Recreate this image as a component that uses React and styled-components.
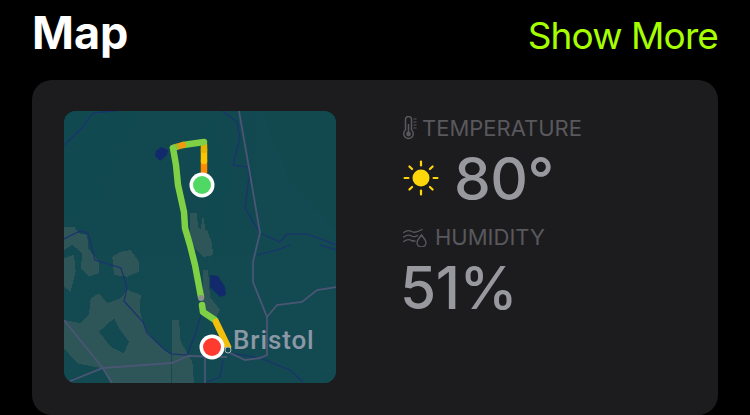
import styled, {createGlobalStyle} from "styled-components";

const GlobalStyle = createGlobalStyle`
  html, body {
    margin: 0;
    background: #000;
    overflow: hidden;
  }
`;

const Page = styled.div`
  width: 750px;
  height: 415px;
  box-sizing: border-box;
  padding: 0 32px;
  font-family: Inter, "Liberation Sans", sans-serif;
`;

const Header = styled.header`
  display: flex;
  justify-content: space-between;
  align-items: baseline;
  height: 80px;
  box-sizing: border-box;
  padding-top: 5px;
`;

const Title = styled.h1`
  margin: 0;
  font-size: 45px;
  line-height: 56px;
  font-weight: 700;
  color: #fff;
`;

const ShowMore = styled.a`
  font-size: 37px;
  line-height: 56px;
  font-weight: 400;
  letter-spacing: -0.9px;
  color: #a6ff00;
`;

const Card = styled.section`
  display: flex;
  gap: 64px;
  height: 335px;
  box-sizing: border-box;
  padding: 31px 32px;
  background: #1c1c1e;
  border-radius: 20px;
`;

const MapBox = styled.div`
  position: relative;
  flex: none;
  width: 272px;
  height: 272px;
  border-radius: 12px;
  overflow: hidden;
  background: #134951;

  svg {
    display: block;
  }
`;

const MapLabel = styled.span`
  position: absolute;
  left: 169px;
  top: 214px;
  font-family: Roboto, "Liberation Sans", sans-serif;
  font-size: 26px;
  line-height: 30px;
  font-weight: 500;
  letter-spacing: 0.9px;
  color: #8c98a6;
`;

const Stats = styled.div`
  display: flex;
  flex-direction: column;
  padding-top: 3px;
`;

const StatLabel = styled.div`
  display: flex;
  align-items: center;
  height: 28px;
  font-size: 22px;
  color: #58585d;

  svg {
    flex: none;
    margin-left: 3px;
    margin-right: ${props => props.$iconGap}px;
  }
`;

const StatValue = styled.div`
  display: flex;
  align-items: center;
  height: 72px;
  margin-bottom: 9px;
  font-size: 58.5px;
  font-weight: 500;
  letter-spacing: -0.5px;
  color: #98989f;

  svg {
    flex: none;
    margin-left: 3px;
    margin-right: 15px;
  }
`;

const routeSegments = [
  {color: "#ff8c00", d: "M204 172V161"},
  {color: "#ffc400", d: "M204 161V150"},
  {color: "#e8b400", d: "M204 150V145"},
  {color: "#7fd044", d: "M204 142L183 145"},
  {color: "#f09a10", d: "M183 145L176 147"},
  {color: "#a4b82a", d: "M176 147L173 148"},
  {color: "#7fd044", d: "M173 148L176 165L178 185L184 212L185 228L190 245L195 265L201 297"},
  {color: "#7fd044", d: "M202 305L203 312L215 320"},
  {color: "#f2bf0c", d: "M216 322L228 347"},
];

const roads = [
  "M239 111L249 168L260 233L257 245L253 262L253 282L267 317L267 355L260 358L245 360L230 353",
  "M267 317L277 305L302 302L317 290L337 287",
  "M64 320L102 367L112 383",
  "M68 382L103 368L172 363L188 356L227 357",
  "M205 357V383",
];

const borders = [
  "M64 145L80 130L93 113L115 111",
  "M223 111L237 122L240 138L233 165L248 167L249 177L245 208L260 233",
  "M260 233L280 242L287 234L307 234L337 245",
  "M64 239L80 231L88 233L95 260L121 268L127 288L124 301L143 322L147 333L165 350L172 354L187 355L195 335L202 312",
  "M230 353L260 358L290 370L303 382",
  "M223 360L220 377L207 382",
  "M257 255L277 250L290 245",
  "M320 245L337 250",
];

// traced from an enlarged crop, three times the size of the map
const leftTerrain = [
  "M0 35L30 35L45 55L70 60L72 100L105 140L105 175L75 185L50 160L55 115L25 90L0 105Z",
  "M0 130L30 120L35 170L20 230L0 215Z",
  "M145 125L170 110L200 105L225 140L225 170L190 185L150 180Z",
  "M0 315L50 325L75 300L80 250L105 235L130 265L170 250L190 225L230 240L228 290L245 345L285 390L322 420L322 505L140 505L115 460L40 445L0 400Z",
  "M325 315L345 315L350 380L385 440L390 505L325 505Z",
];

const terrainHole = "M105 350L150 310L165 340L195 380L180 415L140 395Z";

const midTerrain = [
  "M190 213L197 213L198 228L207 230L212 243L213 255L203 257L195 248L190 233Z",
  "M203 270L208 270L210 297L220 310L216 318L203 310Z",
  "M203 215L208 245L199 240Z",
];

const facets = [
  "M64 111H140L100 200L64 225Z",
  "M262 111H336V230L290 180Z",
  "M210 111L232 180L215 260L190 150Z",
];

function MapDrawing() {
    return (
        <svg width="272" height="272" viewBox="64 111 272 272">
            <rect x="64" y="111" width="272" height="272" fill="#134951"/>
            <g fill="#0f4a4e" opacity="0.5">
                {facets.map((d, i) => <path key={i} d={d}/>)}
            </g>
            <g fill="#2e5557" shapeRendering="crispEdges">
                <g transform="translate(64 215) scale(0.3333)">
                    {leftTerrain.map((d, i) => <path key={i} d={d}/>)}
                    <path d={terrainHole} fill="#134951"/>
                </g>
                {midTerrain.map((d, i) => <path key={i} d={d}/>)}
            </g>
            <g fill="none" stroke="#1b3270" strokeWidth="1.2">
                {borders.map((d, i) => <path key={i} d={d}/>)}
            </g>
            <g fill="none" stroke="#4a5674" strokeWidth="1.8">
                {roads.map((d, i) => <path key={i} d={d}/>)}
            </g>
            <path d="M161 147L168 150L167 155L160 161L155 156L156 151Z" fill="#122a6b"/>
            <path d="M210 275L218 276L225 287L226 295L220 297L213 290L210 287Z" fill="#122a6b"/>
            <g fill="none" strokeWidth="6.5" strokeLinecap="round" strokeLinejoin="round">
                {routeSegments.map((s, i) => <path key={i} d={s.d} stroke={s.color}/>)}
            </g>
            <circle cx="201" cy="298" r="3" fill="#8a8f8c"/>
            <circle cx="228" cy="350" r="3" fill="#134951" stroke="#a8b0b8" strokeWidth="1"/>
            <circle cx="202" cy="185" r="12.5" fill="#fff"/>
            <circle cx="202" cy="185" r="9" fill="#4fd964"/>
            <circle cx="212" cy="347" r="12.5" fill="#fff"/>
            <circle cx="212" cy="347" r="9" fill="#ff3b30"/>
        </svg>
    );
}

function ThermometerIcon() {
    return (
        <svg width="14" height="24" viewBox="0 0 14 24" fill="none" stroke="#58585d" strokeWidth="1.5">
            <path d="M2.500 3.500a3 3 0 0 1 6 0V14a4.800 4.800 0 1 1-6 0Z"/>
            <circle cx="5.500" cy="18" r="2.400" fill="#58585d" stroke="none"/>
            <path d="M5.500 18V8"/>
            <path d="M10.500 3H13.500M10.500 6H13.500M10.500 9H13.500M10.500 12H13.500" strokeWidth="1"/>
        </svg>
    );
}

function HumidityIcon() {
    return (
        <svg width="24" height="20" viewBox="0 0 24 20" fill="none" stroke="#58585d" strokeWidth="1.4" strokeLinecap="round">
            <path d="M0.700 5.500C4 3 6 3 8.500 4.500C11 6 14 5.500 19 2.500"/>
            <path d="M0.700 10C4 7.500 6 7.500 8.500 9C10.500 10.200 12 10 14.500 8.500"/>
            <path d="M0.700 14.500C4 12 6 12 8.500 13.500C9.500 14 10.500 14.200 12 14"/>
            <path d="M18.500 8C20.500 11 23 13 23 15.500a4.500 4.500 0 0 1-9 0C14 13 16.500 11 18.500 8Z"/>
        </svg>
    );
}

function SunIcon() {
    const rays = [0, 45, 90, 135, 180, 225, 270, 315];
    return (
        <svg width="36" height="36" viewBox="0 0 36 36">
            <circle cx="18" cy="18" r="8.500" fill="#ffd60a"/>
            {rays.map(a => (
                <rect key={a} x="16.900" y="0.500" width="2.200" height="6" rx="1.100" fill="#ffd60a" transform={`rotate(${a} 18 18)`}/>
            ))}
        </svg>
    );
}

export default function App() {
    return (
        <Page>
            <GlobalStyle/>
            <Header>
                <Title>Map</Title>
                <ShowMore>Show More</ShowMore>
            </Header>
            <Card>
                <MapBox>
                    <MapDrawing/>
                    <MapLabel>Bristol</MapLabel>
                </MapBox>
                <Stats>
                    <StatLabel $iconGap={5}><ThermometerIcon/>TEMPERATURE</StatLabel>
                    <StatValue><SunIcon/>80°</StatValue>
                    <StatLabel $iconGap={8}><HumidityIcon/>HUMIDITY</StatLabel>
                    <StatValue>51%</StatValue>
                </Stats>
            </Card>
        </Page>
    );
}
